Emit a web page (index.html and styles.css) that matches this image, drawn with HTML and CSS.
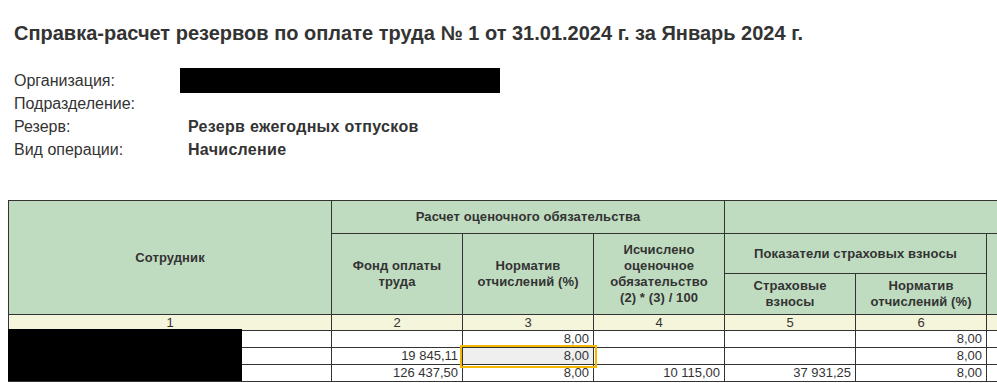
FILE: index.html
```html
<!DOCTYPE html>
<html lang="ru">
<head>
<meta charset="utf-8">
<title>Справка-расчет резервов</title>
<link rel="stylesheet" href="styles.css">
</head>
<body>
<div class="page">
  <h1 class="title">Справка-расчет резервов по оплате труда № 1 от 31.01.2024 г. за Январь 2024 г.</h1>
  <div class="info">
    <div class="label">Организация:</div>
    <div class="value"><div class="redact-org"></div></div>
    <div class="label">Подразделение:</div>
    <div class="value"></div>
    <div class="label">Резерв:</div>
    <div class="value">Резерв ежегодных отпусков</div>
    <div class="label">Вид операции:</div>
    <div class="value">Начисление</div>
  </div>
  <table class="report">
    <colgroup>
      <col class="c-emp">
      <col class="c-num">
      <col class="c-num">
      <col class="c-num">
      <col class="c-num">
      <col class="c-num">
      <col class="c-num">
      <col class="c-num">
    </colgroup>
    <thead>
      <tr class="h1">
        <th rowspan="3">Сотрудник</th>
        <th colspan="3">Расчет оценочного обязательства</th>
        <th colspan="4"></th>
      </tr>
      <tr class="h2">
        <th rowspan="2">Фонд оплаты труда</th>
        <th rowspan="2">Норматив отчислений (%)</th>
        <th rowspan="2">Исчислено оценочное обязательство (2) * (3) / 100</th>
        <th colspan="2">Показатели страховых взносы</th>
        <th rowspan="2"></th>
        <th rowspan="2"></th>
      </tr>
      <tr class="h3">
        <th>Страховые взносы</th>
        <th>Норматив отчислений (%)</th>
      </tr>
      <tr class="nums">
        <td>1</td><td>2</td><td>3</td><td>4</td><td>5</td><td>6</td><td></td><td></td>
      </tr>
    </thead>
    <tbody>
      <tr>
        <td class="emp"><div class="redact-emp"></div></td>
        <td></td>
        <td>8,00</td>
        <td></td>
        <td></td>
        <td>8,00</td>
        <td></td>
        <td></td>
      </tr>
      <tr>
        <td class="emp"></td>
        <td>19 845,11</td>
        <td class="selected">8,00</td>
        <td></td>
        <td></td>
        <td>8,00</td>
        <td></td>
        <td></td>
      </tr>
      <tr>
        <td class="emp"></td>
        <td>126 437,50</td>
        <td>8,00</td>
        <td>10 115,00</td>
        <td>37 931,25</td>
        <td>8,00</td>
        <td></td>
        <td></td>
      </tr>
    </tbody>
  </table>
</div>
</body>
</html>
```

FILE: styles.css
```css
html, body {
  margin: 0;
  padding: 0;
  overflow: hidden;
  background: #fff;
}

body {
  font-family: "Liberation Sans", Arial, sans-serif;
  color: #333;
}

.page {
  padding: 22px 0 0 0;
}

.title {
  margin: 0 0 0 14px;
  font-size: 20px;
  line-height: 23px;
  font-weight: bold;
  color: #333;
  white-space: nowrap;
}

.info {
  display: grid;
  grid-template-columns: 174px 400px;
  margin: 24px 0 0 14px;
  font-size: 16px;
  line-height: 23px;
}

.label {
  color: #333;
}

.value {
  font-weight: bold;
  color: #333;
  min-height: 23px;
  letter-spacing: 0.3px;
}

.redact-org {
  width: 320px;
  height: 25px;
  margin: -1px 0 -1px -8px;
  background: #000;
}

.report {
  margin: 39px 0 0 8px;
  border-collapse: collapse;
  table-layout: fixed;
  width: 1112px;
  font-size: 13px;
  color: #333;
}

.c-emp { width: 323px; }
.c-num { width: 131px; }

.report th,
.report td {
  border: 1px solid #333;
  padding: 0;
}

.report th {
  background: #c0dcc0;
  font-weight: bold;
  text-align: center;
  vertical-align: middle;
  line-height: 16px;
  padding: 0 8px;
  letter-spacing: 0.1px;
}

.report tr.h1 { height: 33px; }
.report tr.h2 { height: 40px; }
.report tr.h3 { height: 41px; }

.report tr.nums td {
  background: #f5f5dc;
  text-align: center;
  height: 15px;
  line-height: 15px;
  font-weight: normal;
}

.report tbody td {
  height: 16px;
  line-height: 16px;
  text-align: right;
  padding: 0 4px 0 0;
  white-space: nowrap;
}

.report td.emp {
  position: relative;
}

.redact-emp {
  position: absolute;
  left: -1px;
  top: -2px;
  width: 234px;
  height: 52px;
  background: #000;
}

.report td.selected {
  position: relative;
  background: #efefef;
}

.report td.selected::after {
  content: "";
  position: absolute;
  top: -3px;
  bottom: -4px;
  left: -3px;
  right: -4px;
  border: 2px solid #f5b800;
  pointer-events: none;
}
```
